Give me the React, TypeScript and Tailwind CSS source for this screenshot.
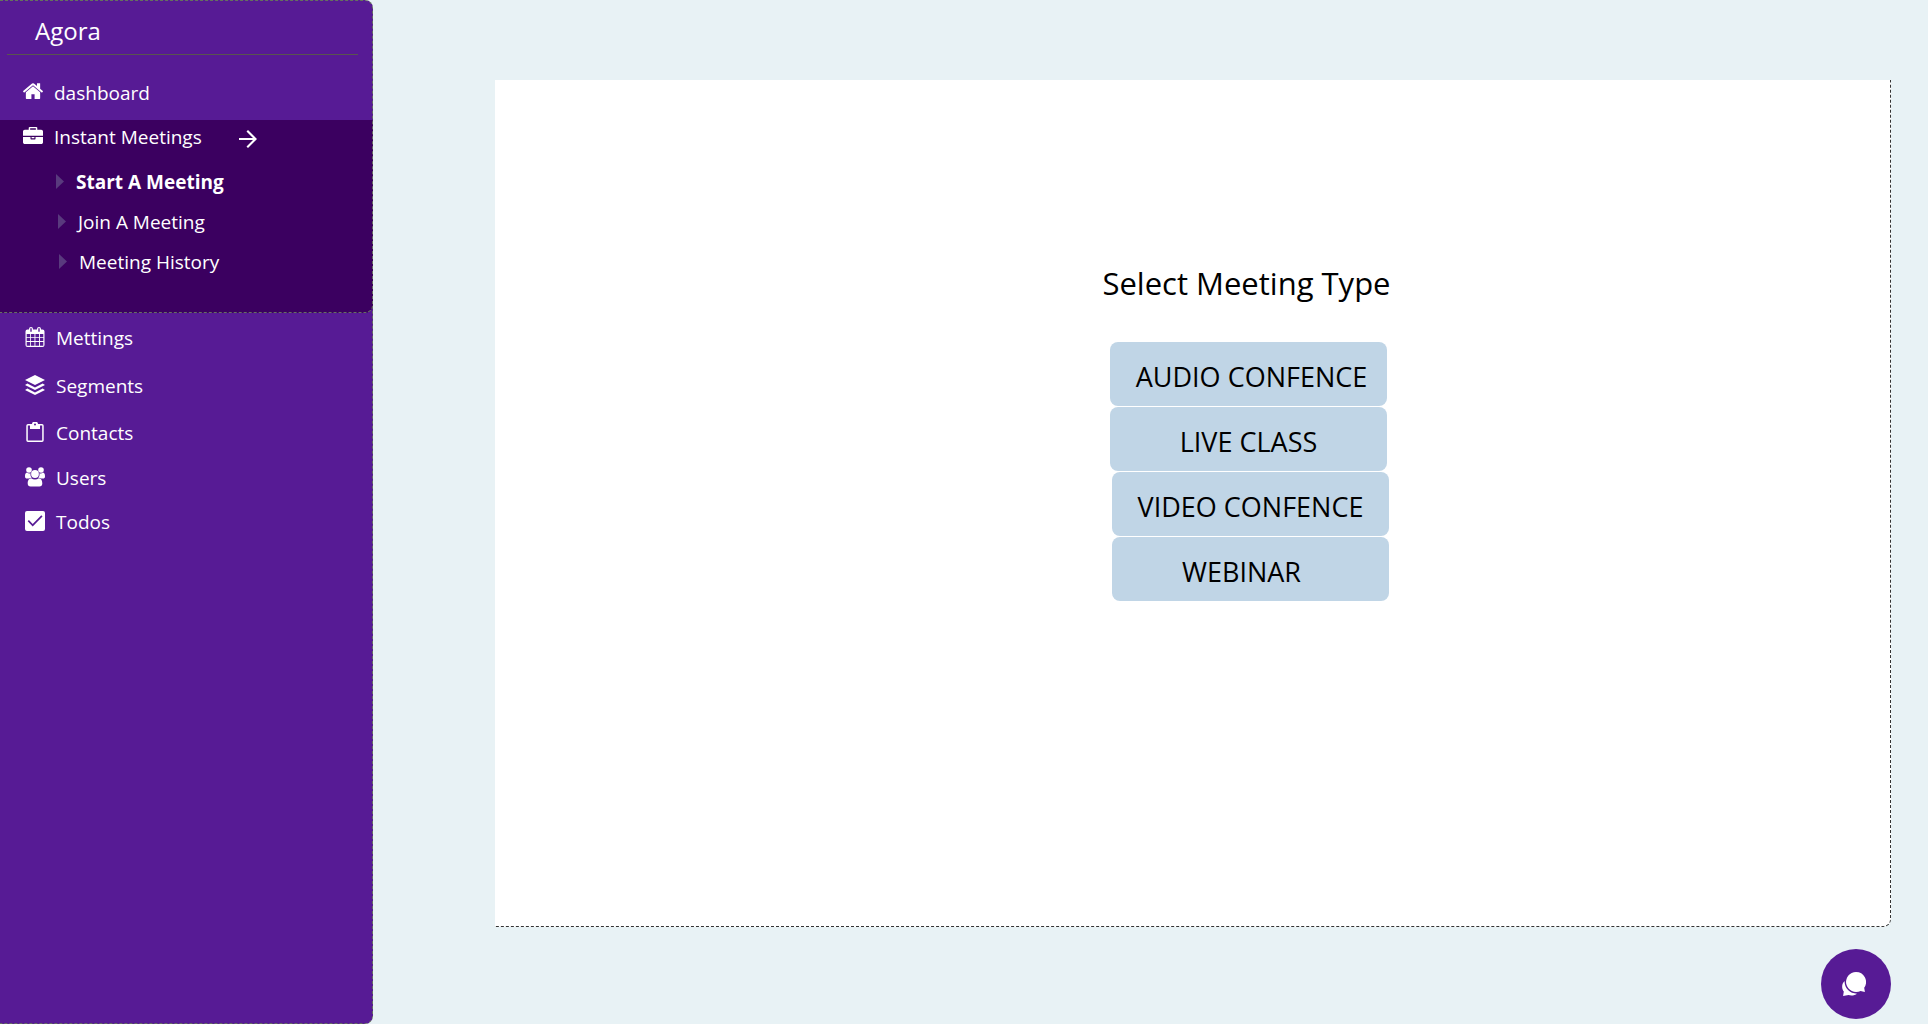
import type { ReactNode } from "react";

type IconProps = { children: ReactNode; viewBox: string; className?: string };

function Icon({ children, viewBox, className = "size-5" }: IconProps) {
  return (
    <svg viewBox={viewBox} className={`shrink-0 ${className}`} fill="currentColor" aria-hidden="true">
      {children}
    </svg>
  );
}

const HomeIcon = () => (
  <Icon viewBox="90 160 1612 1612">
    <path d="M1472 992v480q0 26-19 45t-45 19h-384v-384h-256v384h-384q-26 0-45-19t-19-45v-480q0-1 .5-3t.5-3l575-474 575 474q1 2 1 6zm223-69l-62 74q-8 9-21 11h-3q-13 0-21-7l-692-577-692 577q-12 8-24 7-13-2-21-11l-62-74q-8-10-7-23.500t11-21.500l719-599q32-26 76-26t76 26l244 204v-195q0-14 9-23t23-9h192q14 0 23 9t9 23v408l219 182q10 8 11 21.500t-7 23.500z" />
  </Icon>
);

const BriefcaseIcon = () => (
  <Icon viewBox="0 -80 1792 1792">
    <path d="M640 256h512v-128h-512v128zm1152 640v480q0 66-47 113t-113 47h-1472q-66 0-113-47t-47-113v-480h672v160q0 26 19 45t45 19h320q26 0 45-19t19-45v-160h672zm-768 0v128h-256v-128h256zm768-480v384h-1792v-384q0-66 47-113t113-47h352v-160q0-40 28-68t68-28h576q40 0 68 28t28 68v160h352q66 0 113 47t47 113z" />
  </Icon>
);

const CalendarIcon = () => (
  <Icon viewBox="0 0 20 20">
    <path
      fillRule="evenodd"
      d="M2.500 2.500H4V2a2 2 0 0 1 4 0v.5h4V2a2 2 0 0 1 4 0v.5h1.500A2 2 0 0 1 19.500 4.500V18a2 2 0 0 1-2 2H2.500a2 2 0 0 1-2-2V4.500A2 2 0 0 1 2.500 2.500ZM5.300 1.800v3h1.400v-3a.7.7 0 0 0-1.400 0Zm8 0v3h1.400v-3a.7.7 0 0 0-1.400 0ZM1.700 7v2.900h3.400V7Zm4.200 0v2.900h3.600V7Zm4.500 0v2.900H14V7Zm4.500 0v2.900h3.400V7ZM1.700 10.800v3.300h3.400v-3.300Zm4.200 0v3.300h3.600v-3.300Zm4.500 0v3.300H14v-3.300Zm4.500 0v3.300h3.400v-3.300ZM1.700 15v3.800h3.400V15Zm4.200 0v3.800h3.600V15Zm4.500 0v3.800H14V15Zm4.500 0v3.800h3.400V15Z"
    />
  </Icon>
);

const LayersIcon = () => (
  <Icon viewBox="0 0 20 20">
    <path d="M10 0 20 5 10 10 0 5Z" />
    <path d="m2.400 8.600 7.600 3.800 7.600-3.800L20 9.900l-10 5-10-5Z" />
    <path d="m2.400 13.600 7.600 3.800 7.600-3.800 2.400 1.300-10 5-10-5Z" />
  </Icon>
);

const ClipboardIcon = () => (
  <Icon viewBox="0 0 20 20">
    <path
      fillRule="evenodd"
      d="M3 2h4a3 2.400 0 0 1 6 0h4a1.700 1.700 0 0 1 1.700 1.700v14.600A1.700 1.700 0 0 1 17 20H3a1.700 1.700 0 0 1-1.700-1.700V3.700A1.700 1.700 0 0 1 3 2Zm-.2 1.500v15h14.400v-15H15V7H5V3.500ZM9 2.600a1 1 0 1 0 2 0 1 1 0 0 0-2 0Z"
    />
  </Icon>
);

const UsersIcon = () => (
  <Icon viewBox="0 0 20 20">
    <circle cx="4" cy="3" r="2.800" />
    <circle cx="16" cy="3" r="2.800" />
    <circle cx="10" cy="7" r="3.900" />
    <path d="M2 5.600c1.200.9 2.500 1 3.600.6-.4 1.700 0 3.300 1.100 4.500-1.200 0-2 .3-2.700.9H2.200C.8 11.600 0 10.800 0 9.400 0 7.300.5 5.800 2 5.600Z" />
    <path d="M18 5.600c-1.200.9-2.500 1-3.600.6.4 1.700 0 3.300-1.100 4.500 1.200 0 2 .3 2.700.9h1.800c1.400 0 2.200-.8 2.200-2.200 0-2.100-.5-3.600-2-3.800Z" />
    <path d="M6.200 11.300c2.300 1.700 5.300 1.700 7.600 0 2.600.1 3.500 2.600 3.500 5.300 0 1.800-1.100 2.900-2.900 2.900H5.600c-1.800 0-2.900-1.100-2.900-2.900 0-2.700.9-5.200 3.500-5.300Z" />
  </Icon>
);

const TodoIcon = () => (
  <Icon viewBox="0 0 20 20">
    <path
      fillRule="evenodd"
      d="M2 0h16a2 2 0 0 1 2 2v16a2 2 0 0 1-2 2H2a2 2 0 0 1-2-2V2a2 2 0 0 1 2-2Zm.7 10.200 5 5.300 9.800-10L16.300 4.300l-8.600 8.800L3.900 9Z"
    />
  </Icon>
);

const ArrowIcon = () => (
  <Icon viewBox="0 0 18 18" className="size-[18px]">
    <path d="M0 8h14L7.500 1.500 9 0l9 9-9 9-1.500-1.500L14 10H0Z" />
  </Icon>
);

const ChatIcon = () => (
  <Icon viewBox="0 0 24 24" className="size-6">
    <path d="M14 0a10 10 0 0 1 8.200 15.700l.7 4.300-4.300-1.100A10 10 0 1 1 14 0Z" />
    <path d="M2.600 9c-.3 7 5 12.600 12.400 12.700-2 1.600-5.600 2.300-8.500 1.300L1.100 24l.7-4.400C-.6 16.300-.4 11.800 2.600 9Z" />
  </Icon>
);

const meetingPages = [
  { label: "Start A Meeting", active: true, indent: "pl-14" },
  { label: "Join A Meeting", active: false, indent: "pl-[58px]" },
  { label: "Meeting History", active: false, indent: "pl-[59px]" },
];

const sections = [
  { label: "Mettings", icon: <CalendarIcon />, space: "" },
  { label: "Segments", icon: <LayersIcon />, space: "mt-5" },
  { label: "Contacts", icon: <ClipboardIcon />, space: "mt-[19px]" },
  { label: "Users", icon: <UsersIcon />, space: "mt-[17px]" },
  { label: "Todos", icon: <TodoIcon />, space: "mt-4" },
];

const meetingTypes = [
  { label: "AUDIO CONFENCE", align: "self-start pl-1.5" },
  { label: "LIVE CLASS", align: "self-start" },
  { label: "VIDEO CONFENCE", align: "self-end" },
  { label: "WEBINAR", align: "self-end pr-[18px]" },
];

function Sidebar() {
  return (
    <aside className="w-[373px] shrink-0 rounded-r-lg border-y border-r border-dashed border-[#66705f] bg-[#571b95] text-[19px] leading-7 text-white">
      <div className="ml-[7px] mr-3.5 border-b border-[#59554f] pt-3.5 pb-[7px] pl-7">
        <h1 className="text-2xl leading-8">Agora</h1>
      </div>
      <nav aria-label="Main">
        <a href="#dashboard" className="mt-[23px] flex h-7 items-center gap-[11px] pl-[23px]">
          <HomeIcon />
          <span className="pt-0.5">dashboard</span>
        </a>
        <div className="-mr-px mt-3.5 rounded-br-lg border-r border-b border-dashed border-[#66705f] bg-[#3b0060] pt-0.5 pb-[37px]">
          <a href="#instant" className="flex h-7 items-center gap-[11px] pl-[23px]">
            <BriefcaseIcon />
            <span className="pt-0.5">Instant Meetings</span>
            <span className="ml-[26px] pt-1.5">
              <ArrowIcon />
            </span>
          </a>
          <ul className="mt-[17px] flex flex-col gap-3">
            {meetingPages.map((page) => (
              <li key={page.label}>
                <a
                  href="#meeting"
                  aria-current={page.active ? "page" : undefined}
                  className={`flex h-7 items-center gap-3 ${page.indent} ${page.active ? "font-bold" : ""}`}
                >
                  <Icon viewBox="0 0 8 15" className="h-[15px] w-2 text-[#593a7e]">
                    <path d="M0 0 8 7.500 0 15Z" />
                  </Icon>
                  <span className="pt-0.5">{page.label}</span>
                </a>
              </li>
            ))}
          </ul>
        </div>
        <ul className="mt-2.5">
          {sections.map((section) => (
            <li key={section.label} className={section.space}>
              <a href="#section" className="flex h-7 items-center gap-[11px] pl-[25px]">
                {section.icon}
                <span className="pt-0.5">{section.label}</span>
              </a>
            </li>
          ))}
        </ul>
      </nav>
    </aside>
  );
}

export default function App() {
  return (
    <div className="flex min-h-screen bg-[#e8f2f5] font-['Open_Sans','Noto_Sans',sans-serif]">
      <Sidebar />
      <main className="mt-20 mr-[37px] mb-[97px] ml-[122px] flex flex-1 flex-col items-center rounded-br-lg border-r border-b border-dashed border-[#333] bg-white pt-[183px] pl-[114px] text-black">
        <h2 className="pr-1.5 text-[31px] leading-10">Select Meeting Type</h2>
        <div className="mt-[39px] flex w-[279px] flex-col gap-px">
          {meetingTypes.map((type) => (
            <button
              key={type.label}
              type="button"
              className={`h-16 w-[277px] rounded-lg bg-[#c0d5e6] pt-1.5 text-[27px] leading-9 ${type.align}`}
            >
              {type.label}
            </button>
          ))}
        </div>
      </main>
      <button
        type="button"
        aria-label="Open chat"
        className="fixed right-[37px] bottom-[5px] flex size-[70px] items-center justify-center rounded-full bg-[#571b95] pr-1 text-white"
      >
        <ChatIcon />
      </button>
    </div>
  );
}
